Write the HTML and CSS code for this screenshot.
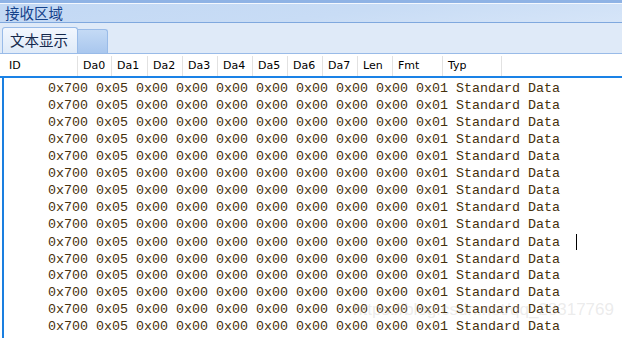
FILE: index.html
```html
<!DOCTYPE html>
<html lang="zh-CN">
<head>
    <meta charset="UTF-8">
    <title>接收区域</title>
    <link rel="stylesheet" href="styles.css">
</head>
<body>
    <div class="panel">
        <div class="panel-title">接收区域</div>

        <div class="tab-strip">
            <div class="tab active">文本显示</div>
            <div class="tab blank"></div>
        </div>

        <div class="grid-header">
            <div class="col col-id">ID</div>
            <div class="col">Da0</div>
            <div class="col">Da1</div>
            <div class="col">Da2</div>
            <div class="col">Da3</div>
            <div class="col">Da4</div>
            <div class="col">Da5</div>
            <div class="col">Da6</div>
            <div class="col">Da7</div>
            <div class="col">Len</div>
            <div class="col">Fmt</div>
            <div class="col">Typ</div>
            <div class="col col-rest"></div>
        </div>

        <div class="text-view">
            <div class="line">0x700 0x05 0x00 0x00 0x00 0x00 0x00 0x00 0x00 0x01 Standard Data</div>
            <div class="line">0x700 0x05 0x00 0x00 0x00 0x00 0x00 0x00 0x00 0x01 Standard Data</div>
            <div class="line">0x700 0x05 0x00 0x00 0x00 0x00 0x00 0x00 0x00 0x01 Standard Data</div>
            <div class="line">0x700 0x05 0x00 0x00 0x00 0x00 0x00 0x00 0x00 0x01 Standard Data</div>
            <div class="line">0x700 0x05 0x00 0x00 0x00 0x00 0x00 0x00 0x00 0x01 Standard Data</div>
            <div class="line">0x700 0x05 0x00 0x00 0x00 0x00 0x00 0x00 0x00 0x01 Standard Data</div>
            <div class="line">0x700 0x05 0x00 0x00 0x00 0x00 0x00 0x00 0x00 0x01 Standard Data</div>
            <div class="line">0x700 0x05 0x00 0x00 0x00 0x00 0x00 0x00 0x00 0x01 Standard Data</div>
            <div class="line">0x700 0x05 0x00 0x00 0x00 0x00 0x00 0x00 0x00 0x01 Standard Data</div>
            <div class="line">0x700 0x05 0x00 0x00 0x00 0x00 0x00 0x00 0x00 0x01 Standard Data  <span class="caret"></span></div>
            <div class="line">0x700 0x05 0x00 0x00 0x00 0x00 0x00 0x00 0x00 0x01 Standard Data</div>
            <div class="line">0x700 0x05 0x00 0x00 0x00 0x00 0x00 0x00 0x00 0x01 Standard Data</div>
            <div class="line">0x700 0x05 0x00 0x00 0x00 0x00 0x00 0x00 0x00 0x01 Standard Data</div>
            <div class="line">0x700 0x05 0x00 0x00 0x00 0x00 0x00 0x00 0x00 0x01 Standard Data</div>
            <div class="line">0x700 0x05 0x00 0x00 0x00 0x00 0x00 0x00 0x00 0x01 Standard Data</div>
            <div class="watermark">https://blog.csdn.net/qq_28317769</div>
        </div>
    </div>
</body>
</html>
```

FILE: styles.css
```css
body {
    margin: 0;
    background-color: #ffffff;
    overflow: hidden;
}
.panel {
    width: 622px;
    height: 338px;
    overflow: hidden;
}
.panel-title {
    height: 19px;
    border-top: 3px solid #8fb3e5;
    border-bottom: 1px solid #7fa8de;
    box-shadow: inset 0 1px 0 #f4f8fe;
    background: linear-gradient(172deg, #c2d8f4 0%, #c8dcf5 55%, #d6e5f8 100%);
    color: #15428b;
    font-family: "Noto Sans CJK SC", sans-serif;
    font-size: 14.5px;
    line-height: 19px;
    padding-left: 5px;
}
.tab-strip {
    height: 30px;
    display: flex;
    align-items: flex-end;
    padding-left: 2px;
    background-color: #dfeaf8;
    border-bottom: 1px solid #99bbe8;
}
.tab {
    box-sizing: border-box;
    border: 1px solid #99bbe8;
    border-bottom: none;
    border-radius: 3px 3px 0 0;
}
.tab.active {
    width: 76px;
    height: 26px;
    background: linear-gradient(#f2f7fe, #dfeaf8);
    color: #15284b;
    font-family: "Noto Sans CJK SC", sans-serif;
    font-size: 14.5px;
    line-height: 24px;
    padding-left: 7px;
}
.tab.blank {
    width: 30px;
    height: 24px;
    border-left: none;
    border-radius: 0 3px 0 0;
    background: linear-gradient(#c4daf5, #a9c7ee);
}
.grid-header {
    display: grid;
    grid-template-columns: 78px 34px 36px 35px 35px 35px 35px 35px 35px 35px 50px 59px 1fr;
    height: 22px;
    border-bottom: 2px solid #1a82e6;
    background-color: #ffffff;
    font-family: "DejaVu Sans", sans-serif;
    font-size: 11px;
    color: #000000;
}
.col {
    border-right: 1px solid #e2e2e2;
    margin-top: 2px;
    padding-left: 5px;
    line-height: 19px;
    white-space: nowrap;
}
.col-id {
    padding-left: 9px;
}
.col-rest {
    border-right: none;
}
.text-view {
    position: relative;
    margin-left: 2px;
    height: 300px;
    border-left: 2px solid #1a7fe0;
    padding: 3px 0 0 44px;
    font-family: "Liberation Mono", monospace;
    font-size: 13.333px;
    line-height: 16.95px;
    color: #46300c;
}
.line {
    white-space: pre;
}
.caret {
    display: inline-block;
    width: 1px;
    height: 16px;
    background-color: #000000;
    vertical-align: -4px;
}
.watermark {
    position: absolute;
    right: 8px;
    top: 224px;
    font-family: "Liberation Sans", sans-serif;
    font-size: 17px;
    color: rgba(190, 190, 190, 0.3);
    white-space: nowrap;
}
```
